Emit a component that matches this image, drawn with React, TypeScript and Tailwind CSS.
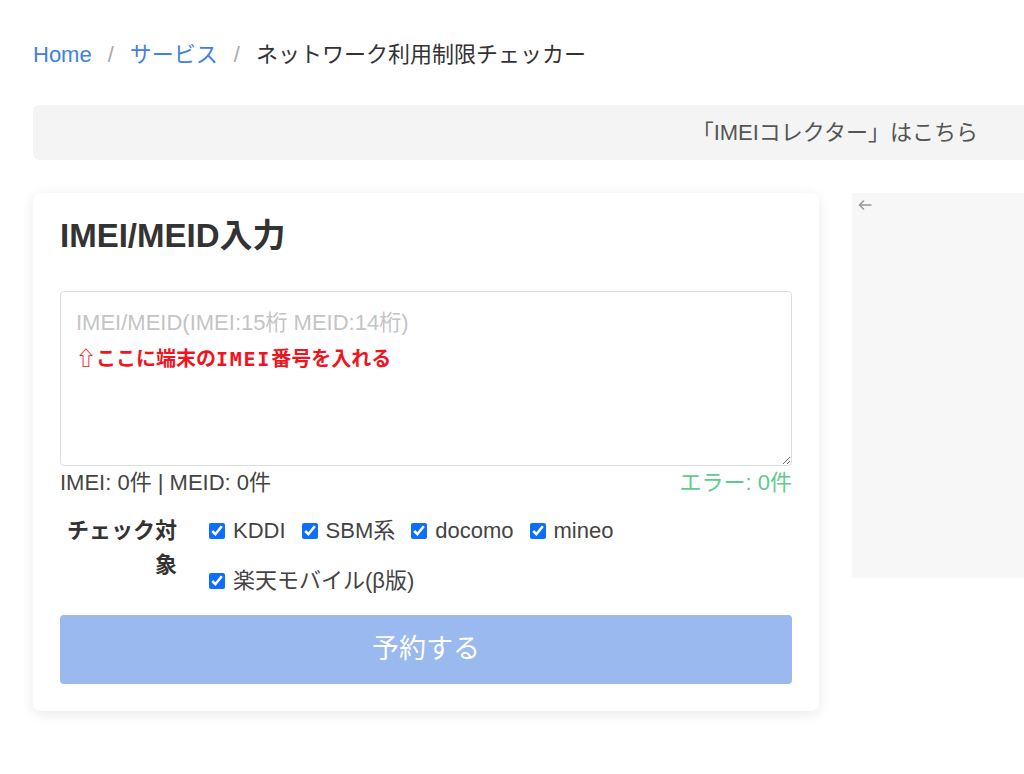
import { useState } from "react";

const carriers = ["KDDI", "SBM系", "docomo", "mineo", "楽天モバイル(β版)"];

function Breadcrumb() {
  return (
    <nav className="flex items-center text-[22px] leading-[32px]">
      <a href="#" className="text-[#4181e2]">Home</a>
      <span className="px-[16px] text-[#aaa]">/</span>
      <a href="#" className="text-[#4181e2]">サービス</a>
      <span className="px-[16px] text-[#aaa]">/</span>
      <span className="text-[#333]">ネットワーク利用制限チェッカー</span>
    </nav>
  );
}

function CheckerCard() {
  const [text, setText] = useState("");
  const [checked, setChecked] = useState<Record<string, boolean>>(
    Object.fromEntries(carriers.map((c) => [c, true]))
  );

  return (
    <section className="w-[786px] shrink-0 rounded-lg bg-white px-[27px] pt-[23px] pb-[27px] shadow-[0_3px_14px_rgba(0,0,0,0.09)]">
      <h2 className="text-[33px] font-bold leading-[40px] text-[#333]">IMEI/MEID入力</h2>

      {/* input area with the hint line laid over it */}
      <div className="relative mt-[35px]">
        <textarea
          value={text}
          onChange={(e) => setText(e.target.value)}
          placeholder="IMEI/MEID(IMEI:15桁 MEID:14桁)"
          className="block h-[175px] w-full rounded border border-[#dedede] px-[15px] py-[16px] text-[22px] leading-[30px] text-[#333] outline-none placeholder:text-[#c4c4c4]"
        />
        {text === "" && (
          <div className="pointer-events-none absolute left-[16px] top-[54px] font-['Noto_Sans_CJK_JP',sans-serif] text-[20px] font-bold leading-[26px] text-[#f0141e]">
            ⇧ここに端末の
            <span className="font-['DejaVu_Sans_Mono',monospace] tracking-[1.75px]">IMEI</span>
            番号を入れる
          </div>
        )}
      </div>

      <div className="mt-[2px] flex justify-between text-[22px] leading-[30px]">
        <span className="text-[#444]">IMEI: 0件 | MEID: 0件</span>
        <span className="text-[#5dcb8b]">エラー: 0件</span>
      </div>

      <div className="mt-[16px] flex">
        <div className="w-[117px] shrink-0 text-right text-[22px] font-bold leading-[34px] text-[#333]">
          チェック対象
        </div>
        <div className="ml-[32px] mt-[2px] flex flex-wrap gap-x-[16px] gap-y-[20px]">
          {carriers.map((c) => (
            <label key={c} className="flex items-center gap-[8px] text-[22px] leading-[30px] text-[#444]">
              <input
                type="checkbox"
                checked={checked[c]}
                onChange={() => setChecked((v) => ({ ...v, [c]: !v[c] }))}
                className="m-0 h-4 w-4 accent-[#0d6efd]"
              />
              {c}
            </label>
          ))}
        </div>
      </div>

      <button
        disabled
        className="mt-[19px] h-[69px] w-full rounded bg-[#9ab9ee] text-[27px] text-white"
      >
        予約する
      </button>
    </section>
  );
}

export default function App() {
  return (
    <div className="h-[774px] w-full overflow-hidden bg-white font-['Liberation_Sans','Noto_Sans_CJK_JP',sans-serif]">
      <div className="w-[1240px] px-[33px] pt-[39px]">
        <Breadcrumb />

        <div className="mt-[34px] flex h-[55px] items-center justify-end rounded-md bg-[#f4f4f4] pr-[229px] text-[22px] text-[#555]">
          「IMEIコレクター」はこちら
        </div>

        <div className="mt-[33px] flex gap-[33px]">
          <CheckerCard />
          <aside className="h-[385px] flex-1 bg-[#f7f7f7] px-[6px] py-[7px]">
            <svg width="14" height="10" viewBox="0 0 14 10" fill="none" stroke="#999" strokeWidth="1.6" strokeLinecap="round" strokeLinejoin="round">
              <path d="M13 5H1.5M5.5 1 1.5 5l4 4" />
            </svg>
          </aside>
        </div>
      </div>
    </div>
  );
}
